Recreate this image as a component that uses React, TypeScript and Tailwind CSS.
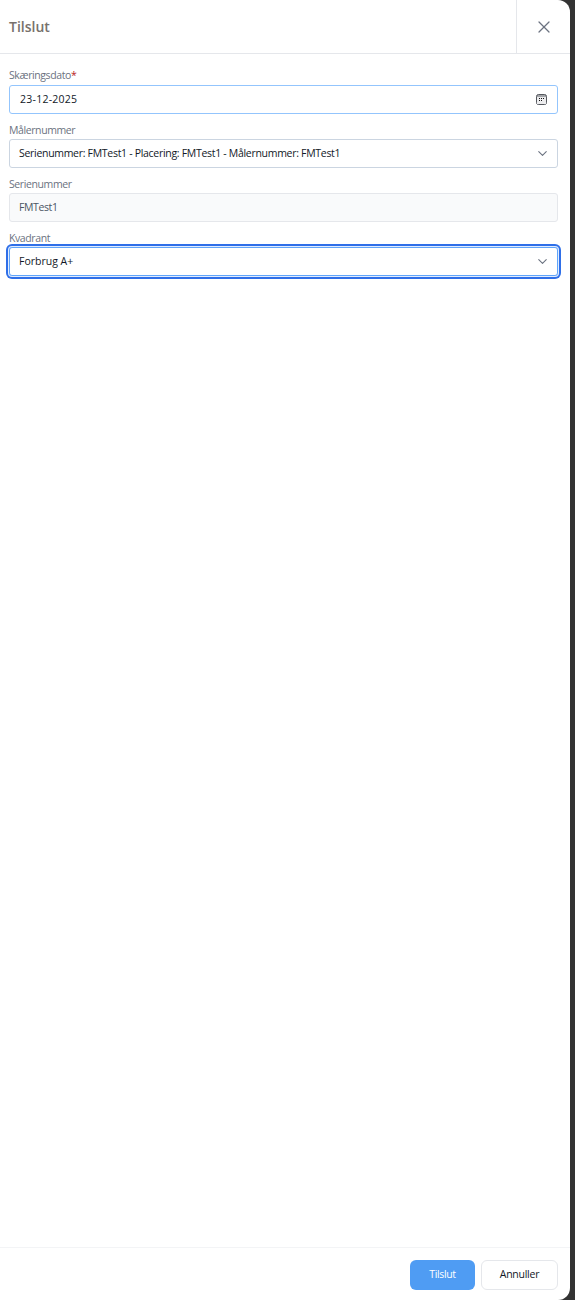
import { ChevronDown, X } from "lucide-react";

const CalendarIcon = () => (
  <svg width="11" height="11" viewBox="0 0 11 11" fill="none">
    <rect x="0.5" y="0.5" width="10" height="10" rx="2" fill="#a3a5a9" stroke="#55585e" />
    <rect x="1" y="3" width="9" height="7" fill="#ececee" />
    <rect x="3" y="4" width="1" height="1" fill="#111" />
    <rect x="5" y="4" width="1" height="1" fill="#111" />
    <rect x="7" y="4" width="1" height="1" fill="#111" />
    <rect x="3" y="6" width="1" height="1" fill="#111" />
    <rect x="5" y="6" width="1" height="1" fill="#111" />
  </svg>
);

const Label = ({ text, required }: { text: string; required?: boolean }) => (
  <div className="h-[16px] text-[10.5px] leading-[15px] tracking-[-0.4px] text-[#6b7280]">
    {text}
    {required && <span className="text-[#b91c1c]">*</span>}
  </div>
);

export default function App() {
  return (
    <div className="h-[1300px] w-[575px] bg-[#333333] font-['Open_Sans',sans-serif]">
      <div className="flex h-full w-[570px] flex-col rounded-r-xl bg-white">
        <div className="flex h-[54px] shrink-0 border-b border-[#e5e7eb]">
          <div className="flex-1 pl-[9px] pt-[15px] text-[14px] font-semibold leading-[24px] text-[#78716c]">
            Tilslut
          </div>
          <div className="flex w-[54px] items-center justify-center border-l border-[#e5e7eb]">
            <X size={20} strokeWidth={1.5} className="text-[#6b7280]" />
          </div>
        </div>

        <div className="flex flex-1 flex-col pl-[9px] pr-[12px] pt-[14px]">
          <div className="mb-[1px]">
            <Label text="Skæringsdato" required />
          </div>
          <div className="flex h-[29px] items-center justify-between rounded-[3px] border border-[#93c5fd] pl-[10px] pr-[10px] text-[10.5px] tracking-[0.25px] text-[#111827]">
            23-12-2025
            <CalendarIcon />
          </div>

          <div className="mt-[9px]">
            <Label text="Målernummer" />
          </div>
          <div className="flex h-[29px] items-center justify-between rounded-[3px] border border-[#cbd5e1] pl-[9px] pr-[7px] text-[10.5px] tracking-[-0.3px] text-[#111827]">
            Serienummer: FMTest1 - Placering: FMTest1 - Målernummer: FMTest1
            <ChevronDown size={15} strokeWidth={1.75} className="text-[#6b7280]" />
          </div>

          <div className="mt-[9px]">
            <Label text="Serienummer" />
          </div>
          <div className="flex h-[29px] items-center rounded-[3px] border border-[#e5e7eb] bg-[#f9fafb] pl-[9px] text-[10.5px] tracking-[-0.4px] text-[#4b5563]">
            FMTest1
          </div>

          <div className="mt-[9px]">
            <Label text="Kvadrant" />
          </div>
          <div className="flex h-[29px] items-center justify-between rounded-[3px] border border-[#60a5fa] pl-[9px] pr-[7px] text-[10.5px] text-[#111827] shadow-[0_0_0_1px_#e0ecff,0_0_0_3px_#2f6fe8]">
            Forbrug A+
            <ChevronDown size={15} strokeWidth={1.75} className="text-[#6b7280]" />
          </div>
        </div>

        <div className="flex h-[53px] shrink-0 items-start justify-end gap-[6px] border-t border-[#f3f4f6] pr-[12px] pt-[12px]">
          <div className="flex h-[30px] w-[65px] items-center justify-center rounded-md bg-[#4f9cf3] text-[10.5px] tracking-[-0.35px] text-white">
            Tilslut
          </div>
          <div className="flex h-[30px] w-[77px] items-center justify-center rounded-md border border-[#e5e7eb] bg-white text-[10.5px] tracking-[-0.25px] text-[#111827]">
            Annuller
          </div>
        </div>
      </div>
    </div>
  );
}
